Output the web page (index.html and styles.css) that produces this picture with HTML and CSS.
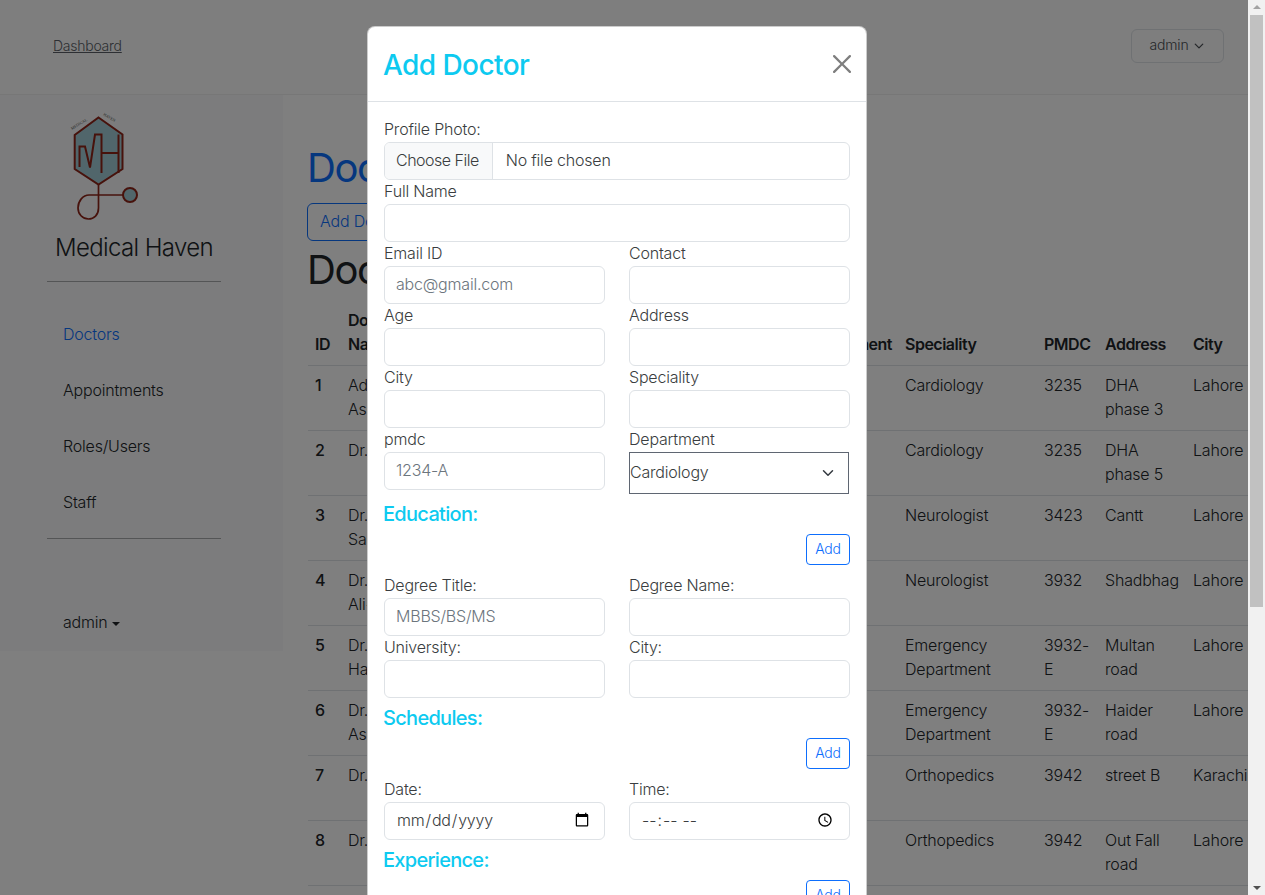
FILE: index.html
```html
<!DOCTYPE html>
<html lang="en">
<head>
	<meta charset="UTF-8">
	<title>Doctors</title>
	<link rel="stylesheet" href="styles.css">
</head>
<body>
	<div class="page">
		<header class="topbar">
			<a class="crumb" href="#">Dashboard</a>
			<button class="user-btn" type="button">admin
				<svg class="chev" viewBox="0 0 16 16"><path d="M2 5l6 6 6-6" fill="none" stroke="currentColor" stroke-width="2" stroke-linecap="round" stroke-linejoin="round"/></svg>
			</button>
		</header>
		<div class="main">
			<aside class="sidebar">
				<svg class="logo" viewBox="0 0 100 125">
					<path d="M48.500 12.500L72.500 29.500V64L48.500 79.500L24.700 64V30z" fill="#a3cdd6" stroke="#8f2418" stroke-width="2"/>
					<path d="M29.500 62V41.500H35L40 62.500L45 29.500H51.500V68M51.500 48H68.500M68.500 29.500V68" fill="none" stroke="#8f2418" stroke-width="2"/>
					<path d="M48.500 79.500V103C48.500 110 44 114 38.500 114C32.500 114 28 109 28 103C28 96 33 90 39 90H73" fill="none" stroke="#8f2418" stroke-width="1.700"/>
					<circle cx="80" cy="90" r="7" fill="#a3cdd6" stroke="#8f2418" stroke-width="2"/>
					<text class="logo-text" transform="translate(22 25) rotate(-32)">MEDICAL</text>
					<text class="logo-text" transform="translate(53 10) rotate(32)">HAVEN</text>
				</svg>
				<div class="brand">Medical Haven</div>
				<hr class="rule">
				<nav class="side-nav">
					<a class="side-link active" href="#">Doctors</a>
					<a class="side-link" href="#">Appointments</a>
					<a class="side-link" href="#">Roles/Users</a>
					<a class="side-link" href="#">Staff</a>
				</nav>
				<hr class="rule rule-low">
				<div class="side-user">admin<span class="caret"></span></div>
			</aside>
			<section class="content">
				<h1 class="title-blue">Doctors</h1>
				<button class="btn-add-doc" type="button">Add Doctor</button>
				<h1 class="title-dark">Doctors List</h1>
				<table class="doc-table">
					<thead>
						<tr>
							<th class="c-id">ID</th>
							<th class="c-name">Doctor Name</th>
							<th class="c-email">Email</th>
							<th class="c-contact">Contact</th>
							<th class="c-dept">Department</th>
							<th class="c-spec">Speciality</th>
							<th class="c-pmdc">PMDC</th>
							<th class="c-addr">Address</th>
							<th class="c-city">City</th>
						</tr>
					</thead>
					<tbody>
						<tr><th>1</th><td>Adeel Asghar</td><td></td><td></td><td></td><td>Cardiology</td><td>3235</td><td>DHA phase 3</td><td>Lahore</td></tr>
						<tr><th>2</th><td>Dr. Ali</td><td></td><td></td><td></td><td>Cardiology</td><td>3235</td><td>DHA phase 5</td><td>Lahore</td></tr>
						<tr><th>3</th><td>Dr. Sana Sarfraz</td><td></td><td></td><td></td><td>Neurologist</td><td>3423</td><td>Cantt</td><td>Lahore</td></tr>
						<tr><th>4</th><td>Dr. Umar Ali-Khan</td><td></td><td></td><td></td><td>Neurologist</td><td>3932</td><td>Shadbhag</td><td>Lahore</td></tr>
						<tr><th>5</th><td>Dr. Ahsan Hamid</td><td></td><td></td><td></td><td>Emergency Department</td><td>3932-E</td><td>Multan road</td><td>Lahore</td></tr>
						<tr><th>6</th><td>Dr. Imran Ashraf</td><td></td><td></td><td></td><td>Emergency Department</td><td>3932-E</td><td>Haider road</td><td>Lahore</td></tr>
						<tr><th>7</th><td>Dr. Asad</td><td></td><td></td><td></td><td>Orthopedics</td><td>3942</td><td>street B</td><td>Karachi</td></tr>
						<tr><th>8</th><td>Dr. Saad</td><td></td><td></td><td></td><td>Orthopedics</td><td>3942</td><td>Out Fall road</td><td>Lahore</td></tr>
					</tbody>
				</table>
			</section>
		</div>

		<div class="backdrop"></div>

		<div class="modal">
			<div class="modal-head">
				<h2 class="modal-title">Add Doctor</h2>
				<svg class="close-x" viewBox="0 0 16 16"><path d="M.293.293a1 1 0 0 1 1.414 0L8 6.586 14.293.293a1 1 0 1 1 1.414 1.414L9.414 8l6.293 6.293a1 1 0 0 1-1.414 1.414L8 9.414l-6.293 6.293a1 1 0 0 1-1.414-1.414L6.586 8 .293 1.707a1 1 0 0 1 0-1.414z"/></svg>
			</div>
			<form class="modal-body">
				<label class="lbl">Profile Photo:</label>
				<input class="field" type="file">
				<label class="lbl">Full Name</label>
				<input class="field" type="text">
				<div class="two-col">
					<div><label class="lbl">Email ID</label><input class="field" type="text" placeholder="abc@gmail.com"></div>
					<div><label class="lbl">Contact</label><input class="field" type="text"></div>
					<div><label class="lbl">Age</label><input class="field" type="text"></div>
					<div><label class="lbl">Address</label><input class="field" type="text"></div>
					<div><label class="lbl">City</label><input class="field" type="text"></div>
					<div><label class="lbl">Speciality</label><input class="field" type="text"></div>
					<div><label class="lbl">pmdc</label><input class="field" type="text" placeholder="1234-A"></div>
					<div><label class="lbl">Department</label>
						<select class="dept-select"><option>Cardiology</option></select>
					</div>
				</div>

				<h5 class="sec-title">Education:</h5>
				<div class="add-row"><button class="btn-add" type="button">Add</button></div>
				<div class="two-col">
					<div><label class="lbl">Degree Title:</label><input class="field" type="text" placeholder="MBBS/BS/MS"></div>
					<div><label class="lbl">Degree Name:</label><input class="field" type="text"></div>
					<div><label class="lbl">University:</label><input class="field" type="text"></div>
					<div><label class="lbl">City:</label><input class="field" type="text"></div>
				</div>

				<h5 class="sec-title">Schedules:</h5>
				<div class="add-row"><button class="btn-add" type="button">Add</button></div>
				<div class="two-col">
					<div><label class="lbl">Date:</label><input class="field" type="date"></div>
					<div><label class="lbl">Time:</label><input class="field" type="time"></div>
				</div>

				<h5 class="sec-title">Experience:</h5>
				<div class="add-row"><button class="btn-add" type="button">Add</button></div>
			</form>
		</div>
	</div>
	<div class="scrollbar">
		<span class="arrow-up"></span>
		<div class="thumb"></div>
		<span class="arrow-down"></span>
	</div>
</body>
</html>
```

FILE: styles.css
```css
*{
	margin:0;
	padding:0;
	box-sizing:border-box;
}
html,body{
	width:100%;
	height:100%;
	overflow:hidden;
}
body{
	display:flex;
	font-family:Inter,"Liberation Sans",sans-serif;
	font-size:16px;
	font-weight:350;
	line-height:24px;
	letter-spacing:-0.2px;
	color:#212529;
	background:#fff;
}
button,input,select{
	letter-spacing:inherit;
}
.page{
	position:relative;
	flex:1;
	min-width:0;
	height:100%;
	overflow:hidden;
}
/* top bar */
.topbar{
	height:95px;
	padding:0 24px 0 53px;
	display:flex;
	align-items:flex-start;
	justify-content:space-between;
	background:#fcfcfc;
	border-bottom:1px solid #eee;
}
.crumb{
	margin-top:34px;
	font-size:14px;
	letter-spacing:-0.25px;
	color:#5a5f66;
}
.user-btn{
	margin-top:29px;
	width:93px;
	height:34px;
	padding:0 1px 2px 0;
	display:flex;
	align-items:center;
	justify-content:center;
	gap:6px;
	font:inherit;
	font-size:14px;
	color:#4b4f55;
	background:none;
	border:1px solid #dee2e6;
	border-radius:6px;
}
.chev{
	width:10px;
	height:10px;
	margin-top:2px;
}
/* sidebar */
.main{
	display:flex;
	align-items:flex-start;
}
.sidebar{
	width:283px;
	flex:none;
	height:556px;
	padding-top:10px;
	background:#f8f9fa;
}
.logo{
	display:block;
	width:100px;
	height:125px;
	margin-left:50px;
}
.logo-text{
	font-family:"Liberation Serif",serif;
	font-size:4px;
	letter-spacing:0;
	fill:#555;
}
.brand{
	width:268px;
	padding-top:1px;
	text-align:center;
	font-size:24px;
	line-height:34px;
	letter-spacing:-0.026em;
}
.rule{
	width:174px;
	height:1px;
	margin:16px 0 25px 47px;
	border:0;
	background:#a9abad;
}
.rule-low{
	margin:7px 0 72px 47px;
}
.side-nav{
	display:flex;
	flex-direction:column;
}
.side-link{
	height:56px;
	padding:15px 0 0 63px;
	color:#212529;
	text-decoration:none;
}
.side-link.active{
	color:#0d6efd;
}
.side-user{
	padding-left:63px;
	line-height:22px;
}
.caret{
	display:inline-block;
	margin-left:4px;
	vertical-align:2px;
	border-top:4.800px solid #212529;
	border-left:4.800px solid transparent;
	border-right:4.800px solid transparent;
}
/* content */
.content{
	flex:1;
	min-width:0;
	padding:49px 0 0 24px;
}
.title-blue,.title-dark{
	font-size:40px;
	line-height:48px;
	font-weight:400;
	letter-spacing:-0.035em;
}
.title-blue{
	color:#0d6efd;
}
.title-dark{
	margin-top:5px;
}
.btn-add-doc{
	display:block;
	margin-top:11px;
	height:38px;
	padding:0 12px 2px;
	font:inherit;
	color:#0d6efd;
	background:none;
	border:1px solid #0d6efd;
	border-radius:6px;
}
.doc-table{
	width:940px;
	margin:6px 0 0 1px;
	table-layout:fixed;
	border-collapse:collapse;
}
.doc-table th,.doc-table td{
	padding:7px 8px 9px;
	height:65px;
	text-align:left;
	vertical-align:top;
	border-bottom:1px solid #dee2e6;
}
.doc-table thead th{
	vertical-align:bottom;
	font-weight:600;
	letter-spacing:-0.5px;
}
.doc-table tbody th{
	font-weight:550;
}
.doc-table th:first-child{
	padding-left:7px;
}
.c-id{width:32px;}
.c-name{width:90px;}
.c-email{width:240px;}
.c-contact{width:127px;}
.c-dept{width:100px;}
.c-spec{width:139px;}
.c-pmdc{width:61px;}
.c-addr{width:88px;}
.c-city{width:63px;}
/* modal */
.backdrop{
	position:absolute;
	top:0;
	left:0;
	right:0;
	bottom:0;
	background:rgba(0,0,0,.5);
}
.modal{
	position:absolute;
	top:26px;
	left:367px;
	width:500px;
	height:1100px;
	background:#fff;
	border:1px solid rgba(0,0,0,.2);
	border-radius:8px;
	color:#3a3d40;
}
.modal-head{
	height:75px;
	padding:0 16px;
	display:flex;
	align-items:center;
	justify-content:space-between;
	border-bottom:1px solid #dee2e6;
}
.modal-title{
	margin:2px 0 0 -1px;
	font-size:28px;
	line-height:34px;
	font-weight:500;
	letter-spacing:-0.02em;
	color:#0dcaf0;
}
.close-x{
	width:18px;
	height:18px;
	margin-right:-1px;
	opacity:.5;
}
.modal-body{
	padding:16px;
}
.lbl{
	display:block;
	height:24px;
	line-height:22px;
}
.field{
	display:block;
	width:100%;
	height:38px;
	padding:5px 12px 7px 11px;
	font:inherit;
	color:#3a3d40;
	background:#fff;
	border:1px solid #dee2e6;
	border-radius:6px;
}
.field::placeholder{
	color:#6c757d;
}
.field::file-selector-button{
	height:38px;
	margin:-7px 13px -7px -11px;
	padding:5px 13px 7px 11px;
	font:inherit;
	letter-spacing:-0.5px;
	color:#3a3d40;
	background:#f8f9fa;
	border:0;
	border-right:1px solid #dee2e6;
}
.two-col{
	display:grid;
	grid-template-columns:221px 221px;
	column-gap:24px;
}
.dept-select{
	display:block;
	width:220px;
	height:42px;
	padding:0 0 2px 0;
	font:inherit;
	color:#3a3d40;
	border:1px solid #5f6672;
	border-radius:0;
	appearance:none;
	background:#fff url("data:image/svg+xml,%3csvg xmlns='http://www.w3.org/2000/svg' viewBox='0 0 16 16'%3e%3cpath fill='none' stroke='%23343a40' stroke-linecap='round' stroke-linejoin='round' stroke-width='2' d='m2 5 6 6 6-6'/%3e%3c/svg%3e") no-repeat right 13px center/14px 12px;
}
.sec-title{
	margin:9px 0 0 -1px;
	font-size:20px;
	line-height:23px;
	font-weight:500;
	letter-spacing:-0.035em;
	color:#0dcaf0;
}
.add-row{
	display:flex;
	justify-content:flex-end;
	margin:8px 0 9px;
}
.btn-add{
	width:44px;
	height:31px;
	padding-bottom:1px;
	font:inherit;
	font-size:14px;
	color:#0d6efd;
	background:#fff;
	border:1px solid #0d6efd;
	border-radius:4px;
}
/* page scrollbar */
.scrollbar{
	width:17px;
	flex:none;
	height:100%;
	position:relative;
	background:#f1f1f1;
}
.thumb{
	position:absolute;
	top:15px;
	left:2px;
	width:13px;
	height:592px;
	background:#c1c1c1;
}
.arrow-up,.arrow-down{
	position:absolute;
	left:5px;
	border-left:4px solid transparent;
	border-right:4px solid transparent;
}
.arrow-up{
	top:5px;
	border-bottom:4px solid #a3a3a3;
}
.arrow-down{
	bottom:5px;
	border-top:4px solid #505050;
}
```
